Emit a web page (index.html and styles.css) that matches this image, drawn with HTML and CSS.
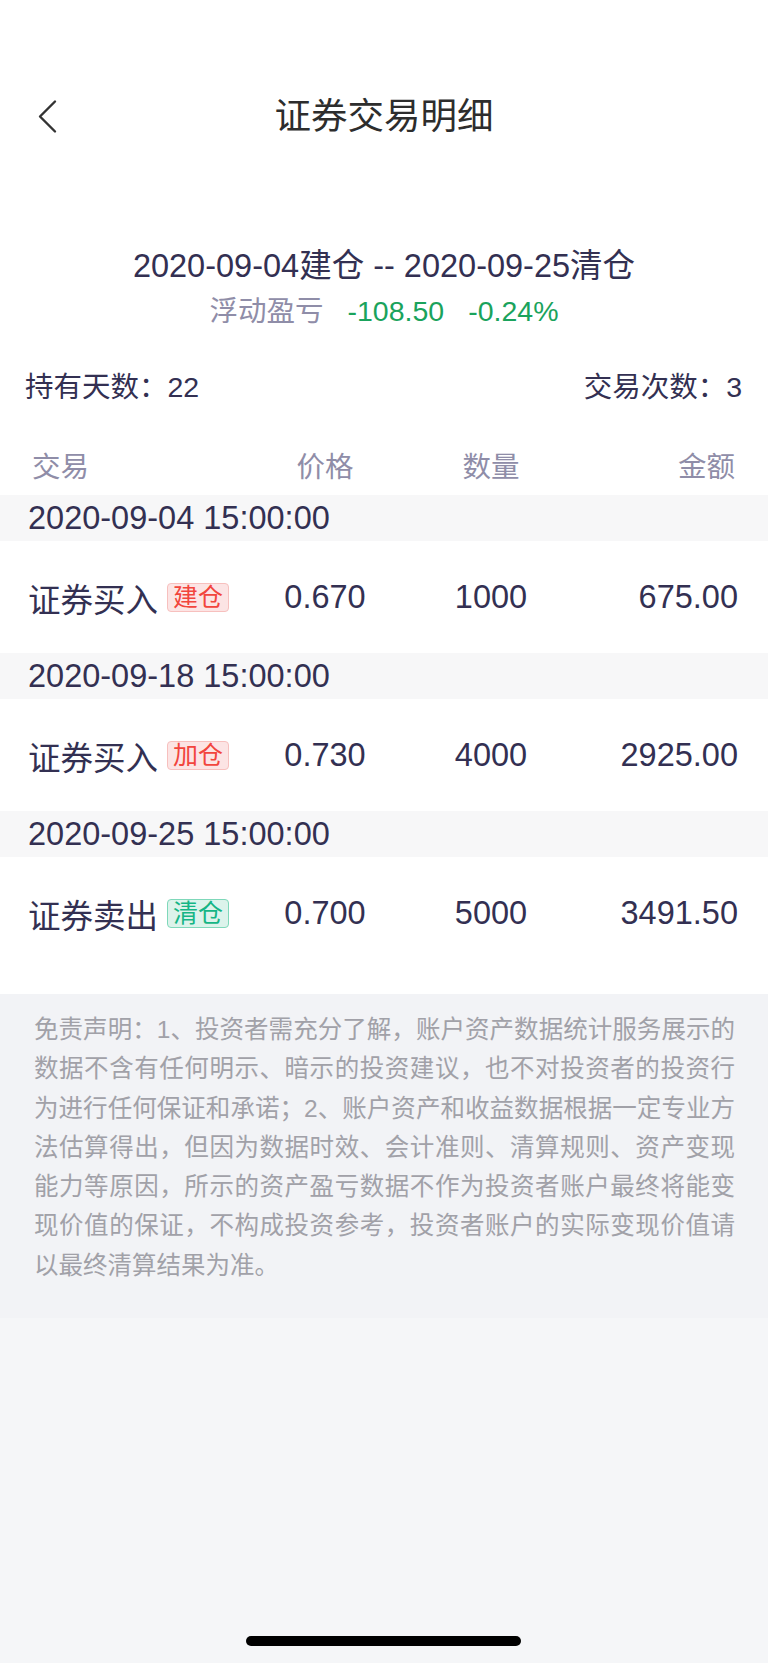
FILE: index.html
```html
<!DOCTYPE html>
<html lang="zh-CN">
<head>
    <meta charset="UTF-8">
    <meta name="viewport" content="width=device-width, initial-scale=1.0">
    <title>证券交易明细</title>
    <link rel="stylesheet" href="styles.css">
</head>
<body>

    <div class="page">
        <div class="main">
            <div class="nav">
                <span class="back">
                    <svg width="22" height="36" viewBox="0 0 22 36">
                        <polyline points="18,2.5 3,17.5 18,32.5" fill="none" stroke="#333" stroke-width="2.4" stroke-linecap="round" stroke-linejoin="round"/>
                    </svg>
                </span>
                <h1 class="nav-title">证券交易明细</h1>
                <span></span>
            </div>

            <div class="summary">
                <p class="period">2020-09-04建仓 -- 2020-09-25清仓</p>
                <p class="profit">浮动盈亏<span class="down">-108.50</span><span class="down">-0.24%</span></p>
            </div>

            <div class="stats">
                <span>持有天数：22</span>
                <span>交易次数：3</span>
            </div>

            <div class="trade-list">
                <div class="trade-head">
                    <span class="col-name">交易</span>
                    <span class="col-price">价格</span>
                    <span class="col-qty">数量</span>
                    <span class="col-amount">金额</span>
                </div>

                <div class="trade-date">2020-09-04 15:00:00</div>
                <div class="trade-row">
                    <span class="col-name">证券买入<em class="tag tag-red">建仓</em></span>
                    <span class="col-price">0.670</span>
                    <span class="col-qty">1000</span>
                    <span class="col-amount">675.00</span>
                </div>

                <div class="trade-date">2020-09-18 15:00:00</div>
                <div class="trade-row">
                    <span class="col-name">证券买入<em class="tag tag-red">加仓</em></span>
                    <span class="col-price">0.730</span>
                    <span class="col-qty">4000</span>
                    <span class="col-amount">2925.00</span>
                </div>

                <div class="trade-date">2020-09-25 15:00:00</div>
                <div class="trade-row">
                    <span class="col-name">证券卖出<em class="tag tag-green">清仓</em></span>
                    <span class="col-price">0.700</span>
                    <span class="col-qty">5000</span>
                    <span class="col-amount">3491.50</span>
                </div>
            </div>
        </div>

        <p class="disclaimer">免责声明：1、投资者需充分了解，账户资产数据统计服务展示的数据不含有任何明示、暗示的投资建议，也不对投资者的投资行为进行任何保证和承诺；2、账户资产和收益数据根据一定专业方法估算得出，但因为数据时效、会计准则、清算规则、资产变现能力等原因，所示的资产盈亏数据不作为投资者账户最终将能变现价值的保证，不构成投资参考，投资者账户的实际变现价值请以最终清算结果为准。</p>

        <div class="home-bar"></div>
    </div>

</body>
</html>
```

FILE: styles.css
```css
* {
    margin: 0;
    padding: 0;
    box-sizing: border-box;
}
body {
    font-family: 'Liberation Sans', 'Noto Sans CJK SC', sans-serif;
    background-color: #f5f6f8;
    color: #333052;
}
.page {
    position: relative;
    min-height: 1663px;
}
.main {
    background-color: #fff;
    padding-top: 88px;
}
.nav {
    display: grid;
    grid-template-columns: 90px 1fr 90px;
    align-items: center;
    height: 58px;
}
.back {
    display: flex;
    padding-left: 37px;
}
.nav-title {
    font-size: 36.5px;
    font-weight: normal;
    color: #2d2d2d;
    text-align: center;
    line-height: 58px;
}
.summary {
    padding-top: 98px;
    text-align: center;
}
.period {
    font-size: 32.5px;
    line-height: 44px;
}
.profit {
    margin-top: 3px;
    font-size: 28.5px;
    line-height: 40px;
    color: #8f8da8;
}
.profit .down {
    color: #1aa35c;
    margin-left: 24px;
}
.stats {
    display: flex;
    justify-content: space-between;
    margin-top: 36px;
    padding: 0 26px 0 25px;
    font-size: 28.5px;
    line-height: 40px;
}
.trade-list {
    margin-top: 26px;
    padding-bottom: 25px;
}
.trade-head, .trade-row {
    display: grid;
    grid-template-columns: 217px 160px 172px 1fr;
    align-items: center;
    padding: 0 30px 0 28px;
}
.trade-head {
    height: 62px;
    font-size: 28.5px;
    color: #8f8da8;
}
.trade-head .col-name {
    padding-left: 4px;
}
.trade-head .col-amount {
    padding-right: 3px;
}
.col-price, .col-qty {
    text-align: center;
}
.col-amount {
    text-align: right;
}
.trade-date {
    height: 46px;
    line-height: 46px;
    padding-left: 28px;
    font-size: 32.5px;
    background-color: #f7f7f8;
}
.trade-row {
    height: 112px;
    font-size: 32.5px;
}
.trade-row .col-name {
    display: flex;
    align-items: center;
}
.tag {
    font-style: normal;
    font-size: 25px;
    line-height: 27px;
    padding: 0 5px;
    margin-left: 9px;
    border: 1.5px solid;
    border-radius: 4px;
}
.tag-red {
    color: #f2453d;
    background-color: #fce4e4;
    border-color: #f7c0be;
}
.tag-green {
    color: #15b585;
    background-color: #dcf3eb;
    border-color: #7fd8ba;
}
.disclaimer {
    background-color: #f2f3f6;
    padding: 16px 33px 33px 34px;
    font-size: 24.5px;
    line-height: 39.25px;
    color: #a1a1a8;
    text-align: justify;
}
.home-bar {
    position: absolute;
    left: 50%;
    bottom: 17px;
    width: 275px;
    height: 10px;
    margin-left: -138px;
    border-radius: 5px;
    background-color: #000;
}
```
